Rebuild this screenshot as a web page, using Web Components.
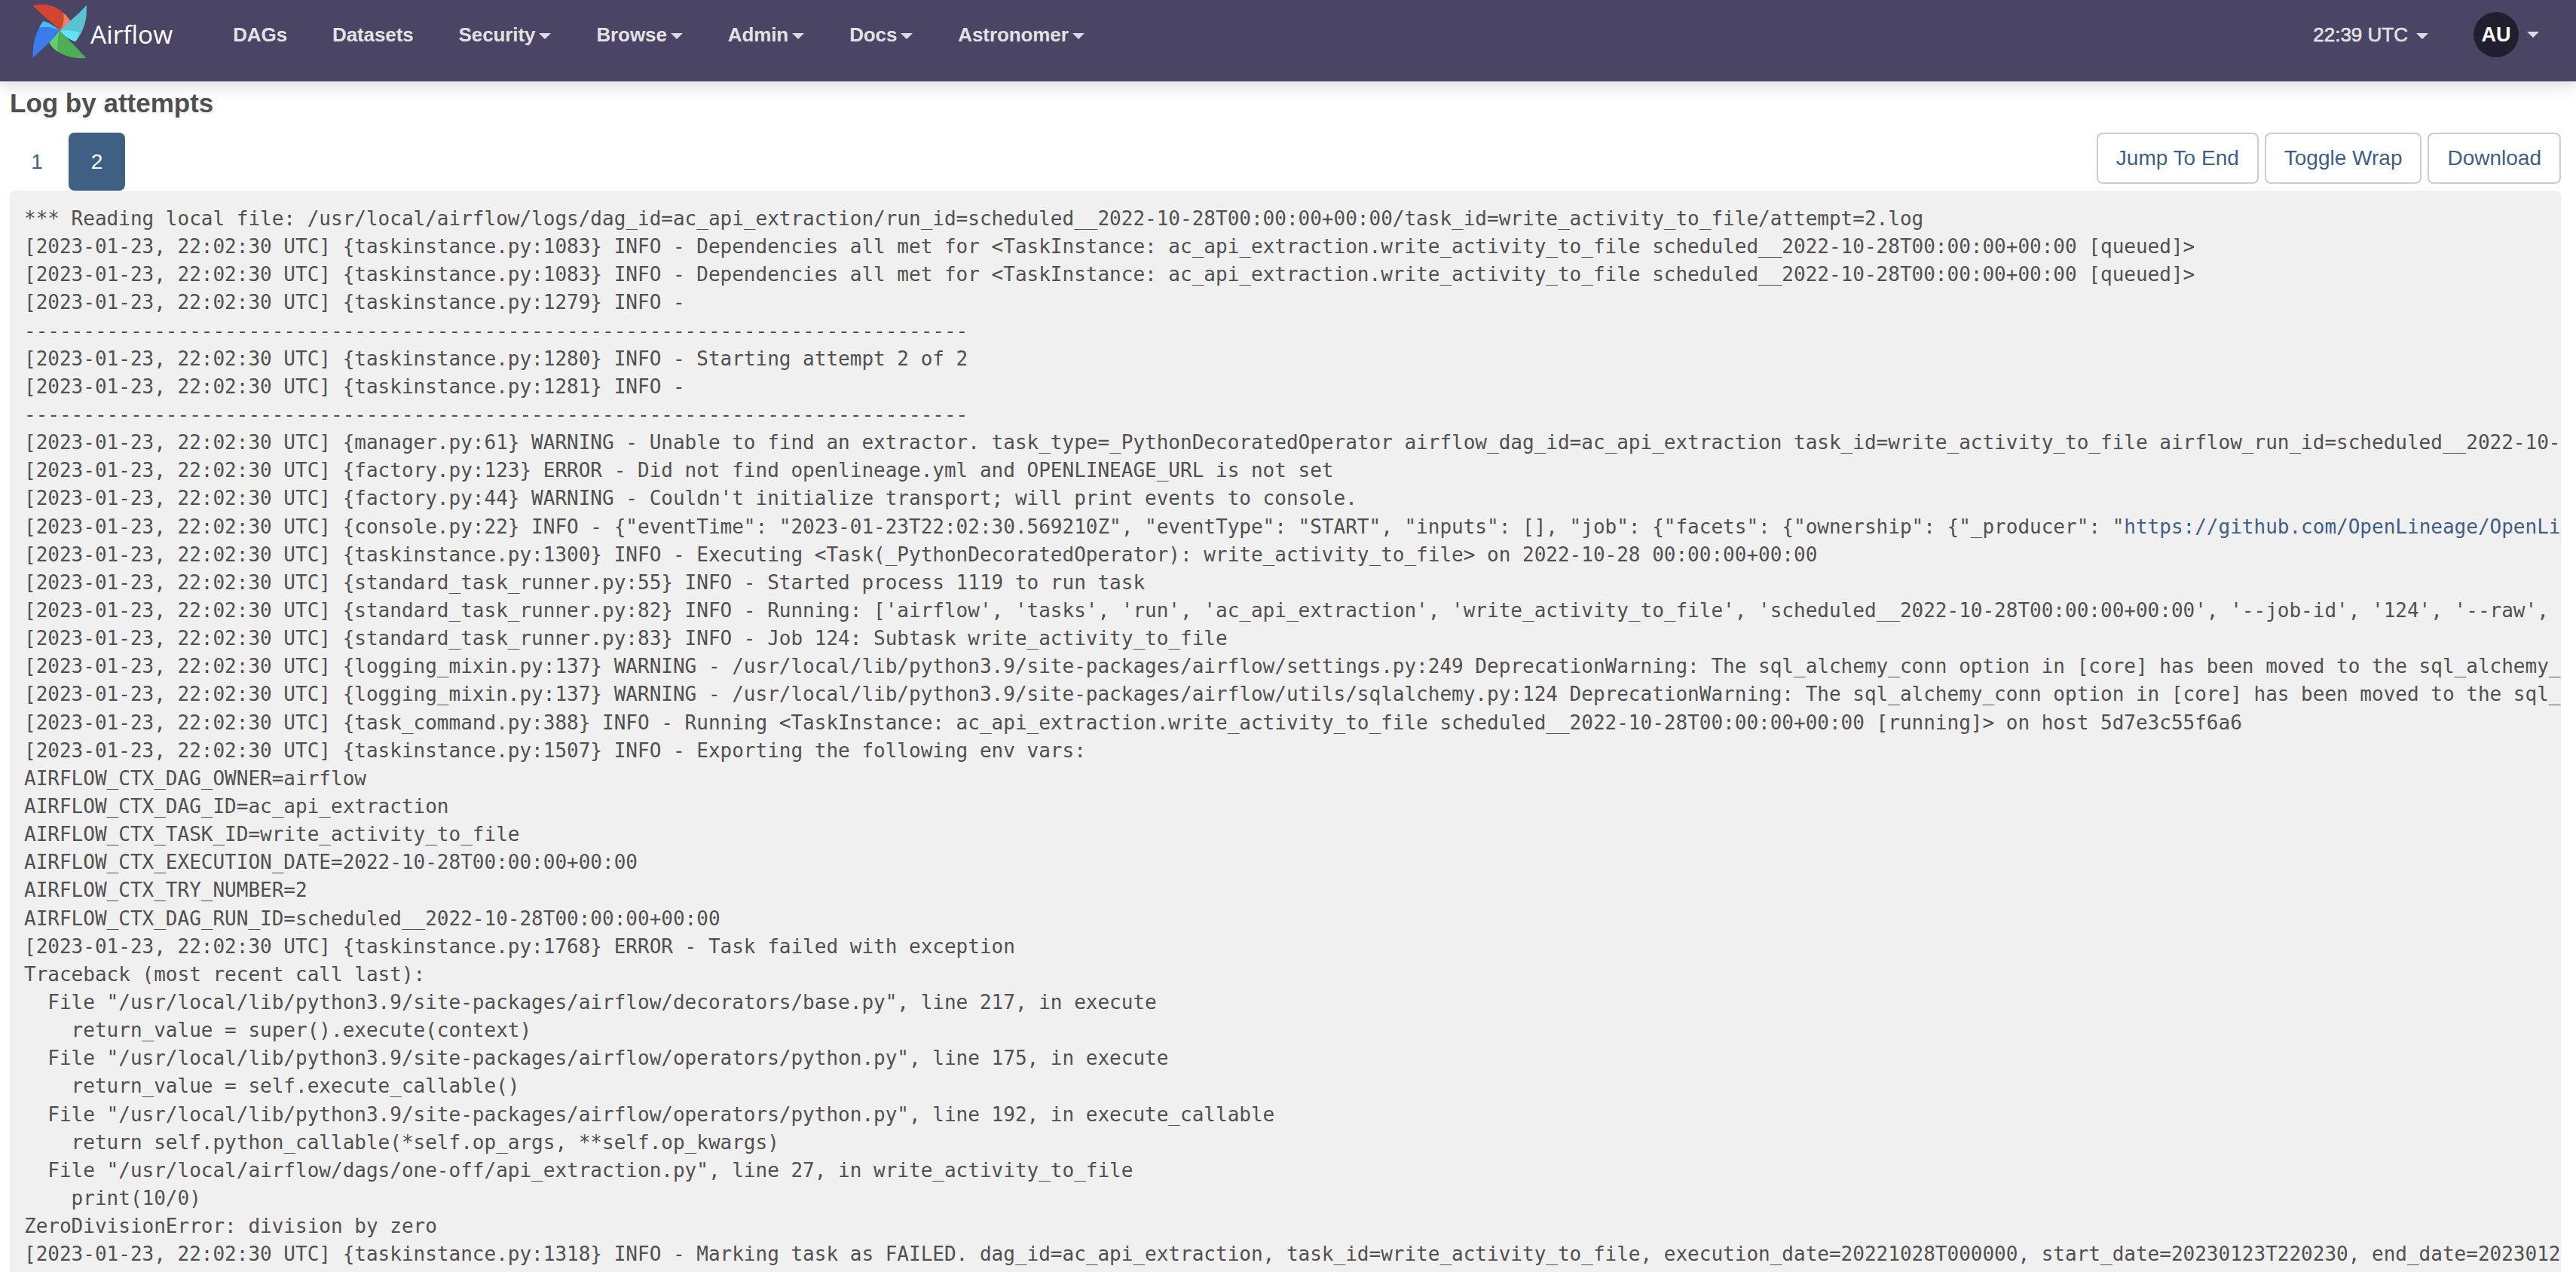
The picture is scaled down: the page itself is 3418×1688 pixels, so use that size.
<!DOCTYPE html>
<html lang="en">
<head>
<meta charset="UTF-8">
<title>Airflow - Log by attempts</title>
<style>
  html, body { margin: 0; height: 100%; overflow: hidden; background: #fff; }
  body { display: flex; flex-direction: column; font-family: "Liberation Sans", Arial, sans-serif; color: #51504f; }
</style>
</head>
<body>

<af-navbar>
  <af-logo slot="brand"></af-logo>
  <af-nav-item>DAGs</af-nav-item>
  <af-nav-item>Datasets</af-nav-item>
  <af-nav-item caret>Security</af-nav-item>
  <af-nav-item caret>Browse</af-nav-item>
  <af-nav-item caret>Admin</af-nav-item>
  <af-nav-item caret>Docs</af-nav-item>
  <af-nav-item caret>Astronomer</af-nav-item>
  <af-clock slot="right">22:39 UTC</af-clock>
  <af-avatar slot="right">AU</af-avatar>
</af-navbar>

<af-log-view heading="Log by attempts">
  <af-tab slot="tabs">1</af-tab>
  <af-tab slot="tabs" active>2</af-tab>
  <af-button slot="actions">Jump To End</af-button>
  <af-button slot="actions">Toggle Wrap</af-button>
  <af-button slot="actions">Download</af-button>
  <af-log>*** Reading local file: /usr/local/airflow/logs/dag_id=ac_api_extraction/run_id=scheduled__2022-10-28T00:00:00+00:00/task_id=write_activity_to_file/attempt=2.log
[2023-01-23, 22:02:30 UTC] {taskinstance.py:1083} INFO - Dependencies all met for &lt;TaskInstance: ac_api_extraction.write_activity_to_file scheduled__2022-10-28T00:00:00+00:00 [queued]&gt;
[2023-01-23, 22:02:30 UTC] {taskinstance.py:1083} INFO - Dependencies all met for &lt;TaskInstance: ac_api_extraction.write_activity_to_file scheduled__2022-10-28T00:00:00+00:00 [queued]&gt;
[2023-01-23, 22:02:30 UTC] {taskinstance.py:1279} INFO - 
--------------------------------------------------------------------------------
[2023-01-23, 22:02:30 UTC] {taskinstance.py:1280} INFO - Starting attempt 2 of 2
[2023-01-23, 22:02:30 UTC] {taskinstance.py:1281} INFO - 
--------------------------------------------------------------------------------
[2023-01-23, 22:02:30 UTC] {manager.py:61} WARNING - Unable to find an extractor. task_type=_PythonDecoratedOperator airflow_dag_id=ac_api_extraction task_id=write_activity_to_file airflow_run_id=scheduled__2022-10-28T00:00:00+00:00
[2023-01-23, 22:02:30 UTC] {factory.py:123} ERROR - Did not find openlineage.yml and OPENLINEAGE_URL is not set
[2023-01-23, 22:02:30 UTC] {factory.py:44} WARNING - Couldn't initialize transport; will print events to console.
[2023-01-23, 22:02:30 UTC] {console.py:22} INFO - {"eventTime": "2023-01-23T22:02:30.569210Z", "eventType": "START", "inputs": [], "job": {"facets": {"ownership": {"_producer": "<a>https://github.com/OpenLineage/OpenLineage</a>
[2023-01-23, 22:02:30 UTC] {taskinstance.py:1300} INFO - Executing &lt;Task(_PythonDecoratedOperator): write_activity_to_file&gt; on 2022-10-28 00:00:00+00:00
[2023-01-23, 22:02:30 UTC] {standard_task_runner.py:55} INFO - Started process 1119 to run task
[2023-01-23, 22:02:30 UTC] {standard_task_runner.py:82} INFO - Running: ['airflow', 'tasks', 'run', 'ac_api_extraction', 'write_activity_to_file', 'scheduled__2022-10-28T00:00:00+00:00', '--job-id', '124', '--raw', '--subdir'
[2023-01-23, 22:02:30 UTC] {standard_task_runner.py:83} INFO - Job 124: Subtask write_activity_to_file
[2023-01-23, 22:02:30 UTC] {logging_mixin.py:137} WARNING - /usr/local/lib/python3.9/site-packages/airflow/settings.py:249 DeprecationWarning: The sql_alchemy_conn option in [core] has been moved to the sql_alchemy_conn option
[2023-01-23, 22:02:30 UTC] {logging_mixin.py:137} WARNING - /usr/local/lib/python3.9/site-packages/airflow/utils/sqlalchemy.py:124 DeprecationWarning: The sql_alchemy_conn option in [core] has been moved to the sql_alchemy_conn
[2023-01-23, 22:02:30 UTC] {task_command.py:388} INFO - Running &lt;TaskInstance: ac_api_extraction.write_activity_to_file scheduled__2022-10-28T00:00:00+00:00 [running]&gt; on host 5d7e3c55f6a6
[2023-01-23, 22:02:30 UTC] {taskinstance.py:1507} INFO - Exporting the following env vars:
AIRFLOW_CTX_DAG_OWNER=airflow
AIRFLOW_CTX_DAG_ID=ac_api_extraction
AIRFLOW_CTX_TASK_ID=write_activity_to_file
AIRFLOW_CTX_EXECUTION_DATE=2022-10-28T00:00:00+00:00
AIRFLOW_CTX_TRY_NUMBER=2
AIRFLOW_CTX_DAG_RUN_ID=scheduled__2022-10-28T00:00:00+00:00
[2023-01-23, 22:02:30 UTC] {taskinstance.py:1768} ERROR - Task failed with exception
Traceback (most recent call last):
  File "/usr/local/lib/python3.9/site-packages/airflow/decorators/base.py", line 217, in execute
    return_value = super().execute(context)
  File "/usr/local/lib/python3.9/site-packages/airflow/operators/python.py", line 175, in execute
    return_value = self.execute_callable()
  File "/usr/local/lib/python3.9/site-packages/airflow/operators/python.py", line 192, in execute_callable
    return self.python_callable(*self.op_args, **self.op_kwargs)
  File "/usr/local/airflow/dags/one-off/api_extraction.py", line 27, in write_activity_to_file
    print(10/0)
ZeroDivisionError: division by zero
[2023-01-23, 22:02:30 UTC] {taskinstance.py:1318} INFO - Marking task as FAILED. dag_id=ac_api_extraction, task_id=write_activity_to_file, execution_date=20221028T000000, start_date=20230123T220230, end_date=20230123T220230</af-log>
</af-log-view>

<script>
  // small helper, every element gets an open shadow root with its own styles
  function shadowOf(el, html) {
    const root = el.attachShadow({ mode: 'open' });
    root.innerHTML = html;
    return root;
  }

  const caretCss = `
    .caret {
      display: inline-block; width: 0; height: 0; margin-left: 5px; vertical-align: 3px;
      border-top: 8px solid #e0d8e4; border-left: 8px solid transparent; border-right: 8px solid transparent;
    }`;

  class AfNavbar extends HTMLElement {
    constructor() {
      super();
      shadowOf(this, `
        <style>
          :host {
            display: flex; flex: none; align-items: flex-start; height: 108px; padding: 0 49px 0 43px;
            box-sizing: border-box; background: #4a4465; position: relative; z-index: 2;
            box-shadow: 0 4px 22px rgba(0,0,0,.17);
          }
          .links { display: flex; margin-left: 80px; height: 92px; align-items: center; gap: 60px; }
          .right { display: flex; margin-left: auto; height: 92px; align-items: center; gap: 60px; }
          .brand { display: block; }
        </style>
        <div class="brand"><slot name="brand"></slot></div>
        <div class="links"><slot></slot></div>
        <div class="right"><slot name="right"></slot></div>`);
    }
  }

  class AfLogo extends HTMLElement {
    constructor() {
      super();
      shadowOf(this, `
        <style>
          :host { display: flex; align-items: flex-start; padding-top: 6px; }
          svg { display: block; width: 72px; height: 72px; }
          span { font: 400 33.5px/1 "Open Sans", sans-serif; color: #fff; margin: 23px 0 0 5px; }
        </style>
        <svg viewBox="68 18 216 216" aria-hidden="true">
          <path fill="#d4452f" d="M70 22C105 14 150 14 190 50C196 75 192 100 177 122C150 90 105 62 70 22Z"/>
          <path fill="#f27f5e" d="M190 50C205 62 215 75 222 87C205 100 190 110 177 122C192 100 196 75 190 50Z"/>
          <path fill="#5ac3d1" d="M283 20C287 70 275 125 240 165C222 160 195 145 177 122C190 105 250 60 283 20Z"/>
          <path fill="#66e0f3" d="M177 122C200 118 235 122 256 130C252 142 246 155 240 165C220 160 195 145 177 122Z"/>
          <path fill="#4caf55" d="M177 122C210 155 250 195 282 231C245 234 205 228 172 207C165 180 170 155 177 122Z"/>
          <path fill="#65d06b" d="M177 122C170 155 165 180 172 207C150 195 140 180 133 165C145 145 160 135 177 122Z"/>
          <path fill="#3a7cec" d="M70 231C68 185 78 140 95 110C125 105 155 110 177 122C150 160 110 190 70 231Z"/>
          <path fill="#4db8fa" d="M112 85C130 88 160 105 177 122C150 108 120 105 95 110C100 100 105 92 112 85Z"/>
        </svg>
        <span>Airflow</span>`);
    }
  }

  class AfNavItem extends HTMLElement {
    constructor() {
      super();
      shadowOf(this, `
        <style>
          :host { display: block; font: 700 26px/1 "Liberation Sans", Arial, sans-serif; color: #e3e1e1; letter-spacing: -.1px; white-space: nowrap; }
          ${caretCss}
        </style>
        <slot></slot>${this.hasAttribute('caret') ? '<span class="caret"></span>' : ''}`);
    }
  }

  class AfClock extends HTMLElement {
    constructor() {
      super();
      shadowOf(this, `
        <style>
          :host { display: block; font: 400 26px/1 "Liberation Sans", Arial, sans-serif; color: #e3e1e1; -webkit-text-stroke: .6px #e3e1e1; white-space: nowrap; }
          ${caretCss}
          .caret { margin-left: 11px; }
        </style>
        <slot></slot><span class="caret"></span>`);
    }
  }

  class AfAvatar extends HTMLElement {
    constructor() {
      super();
      shadowOf(this, `
        <style>
          :host { display: flex; align-items: center; font: 700 27px/1 "Liberation Sans", Arial, sans-serif; color: #fff; }
          .circle { width: 60px; height: 60px; border-radius: 50%; background: #211f2e; display: flex; align-items: center; justify-content: center; }
          ${caretCss}
          .caret { margin-left: 11px; vertical-align: 0; }
        </style>
        <div class="circle"><slot></slot></div><span class="caret"></span>`);
    }
  }

  class AfLogView extends HTMLElement {
    constructor() {
      super();
      shadowOf(this, `
        <style>
          :host { display: flex; flex-direction: column; flex: 1; min-height: 0; padding: 0 20px 0 13px; overflow: hidden; }
          h4 { margin: 0; height: 68px; font: 700 35px/57px "Liberation Sans", Arial, sans-serif; color: #51504f; }
          .bar { display: flex; justify-content: space-between; align-items: flex-start; height: 77px; }
          .tabs, .actions { display: flex; }
          .tabs { gap: 3px; }
          .actions { gap: 8px; }
        </style>
        <h4>${this.getAttribute('heading')}</h4>
        <div class="bar">
          <div class="tabs"><slot name="tabs"></slot></div>
          <div class="actions"><slot name="actions"></slot></div>
        </div>
        <slot></slot>`);
    }
  }

  class AfTab extends HTMLElement {
    constructor() {
      super();
      shadowOf(this, `
        <style>
          :host {
            display: flex; align-items: center; justify-content: center; width: 75px; height: 77px;
            box-sizing: border-box; border-radius: 8px 8px 0 0;
            font: 400 28px/1 "Liberation Sans", Arial, sans-serif; color: #3f5f84;
          }
          :host(:not([active])) { padding-right: 3px; }
          :host([active]) { background: #3f5f84; color: #fff; border-radius: 8px; }
        </style>
        <slot></slot>`);
    }
  }

  class AfButton extends HTMLElement {
    constructor() {
      super();
      shadowOf(this, `
        <style>
          :host {
            display: flex; align-items: center; height: 68px; padding: 0 24px; box-sizing: border-box;
            border: 2px solid #ccc; border-radius: 8px; background: #fff;
            font: 400 28px/1 "Liberation Sans", Arial, sans-serif; color: #3f5f84; white-space: nowrap;
          }
        </style>
        <slot></slot>`);
    }
  }

  class AfLog extends HTMLElement {
    constructor() {
      super();
      shadowOf(this, `
        <style>
          :host { display: block; flex: 1; min-height: 0; background: #f0f0f0; border-radius: 8px 8px 0 0; overflow: hidden; }
          pre {
            margin: 0; padding: 19px; font: 400 26px/37.14px "DejaVu Sans Mono", monospace; color: #51504f;
            white-space: pre; tab-size: 8;
          }
          ::slotted(a) { color: #3f5f84; }
        </style>
        <pre><slot></slot></pre>`);
    }
  }

  customElements.define('af-navbar', AfNavbar);
  customElements.define('af-logo', AfLogo);
  customElements.define('af-nav-item', AfNavItem);
  customElements.define('af-clock', AfClock);
  customElements.define('af-avatar', AfAvatar);
  customElements.define('af-log-view', AfLogView);
  customElements.define('af-tab', AfTab);
  customElements.define('af-button', AfButton);
  customElements.define('af-log', AfLog);
</script>
</body>
</html>
